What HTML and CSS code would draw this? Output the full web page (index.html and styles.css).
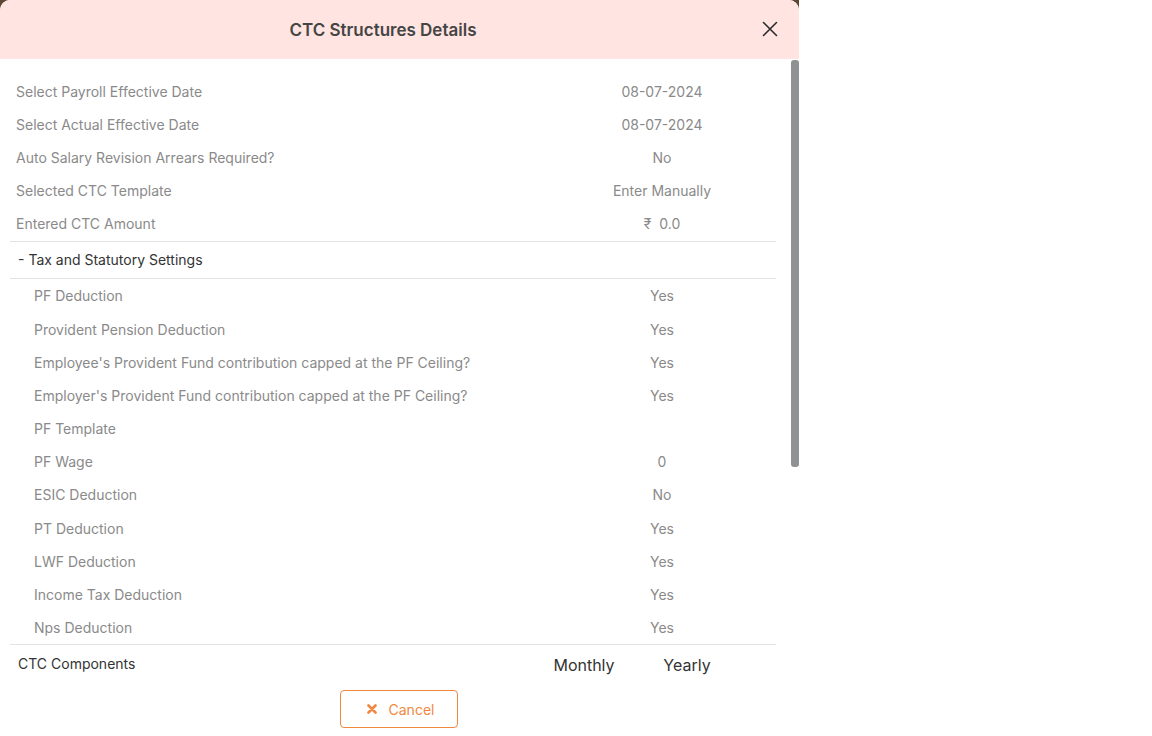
FILE: index.html
```html
<!DOCTYPE html>
<html>
<head>
<meta charset="utf-8">
<link rel="stylesheet" href="styles.css">
</head>
<body>
<div class="backdrop">
  <div class="modal">
    <div class="header">
      <div class="title">CTC Structures Details</div>
      <button class="close" aria-label="Close">
        <svg width="16" height="16" viewBox="0 0 16 16"><path d="M1.5 1.5 L14.5 14.5 M14.5 1.5 L1.5 14.5" stroke="#2b2b2b" stroke-width="1.6" fill="none" stroke-linecap="round"/></svg>
      </button>
    </div>
    <div class="body">
      <div class="content">
        <div class="row"><span class="label">Select Payroll Effective Date</span><span class="value">08-07-2024</span></div>
        <div class="row"><span class="label">Select Actual Effective Date</span><span class="value">08-07-2024</span></div>
        <div class="row"><span class="label">Auto Salary Revision Arrears Required?</span><span class="value">No</span></div>
        <div class="row"><span class="label">Selected CTC Template</span><span class="value">Enter Manually</span></div>
        <div class="row"><span class="label">Entered CTC Amount</span><span class="value">₹&nbsp; 0.0</span></div>
        <div class="section">- Tax and Statutory Settings</div>
        <div class="row sub"><span class="label">PF Deduction</span><span class="value">Yes</span></div>
        <div class="row sub"><span class="label">Provident Pension Deduction</span><span class="value">Yes</span></div>
        <div class="row sub"><span class="label">Employee's Provident Fund contribution capped at the PF Ceiling?</span><span class="value">Yes</span></div>
        <div class="row sub"><span class="label">Employer's Provident Fund contribution capped at the PF Ceiling?</span><span class="value">Yes</span></div>
        <div class="row sub"><span class="label">PF Template</span><span class="value"></span></div>
        <div class="row sub"><span class="label">PF Wage</span><span class="value">0</span></div>
        <div class="row sub"><span class="label">ESIC Deduction</span><span class="value">No</span></div>
        <div class="row sub"><span class="label">PT Deduction</span><span class="value">Yes</span></div>
        <div class="row sub"><span class="label">LWF Deduction</span><span class="value">Yes</span></div>
        <div class="row sub"><span class="label">Income Tax Deduction</span><span class="value">Yes</span></div>
        <div class="row sub"><span class="label">Nps Deduction</span><span class="value">Yes</span></div>
        <div class="components">
          <span class="comp-title">CTC Components</span>
          <span class="comp-col">Monthly</span>
          <span class="comp-col">Yearly</span>
          <span></span>
        </div>
        <div class="actions">
          <button class="cancel">
            <svg width="10" height="10" viewBox="0 0 10 10"><path d="M1.5 1.5 L8.5 8.5 M8.5 1.5 L1.5 8.5" stroke="#f0883f" stroke-width="2.6" fill="none" stroke-linecap="round"/></svg>
            <span>Cancel</span>
          </button>
        </div>
      </div>
      <div class="scrollbar"><div class="thumb"></div></div>
    </div>
  </div>
</div>
</body>
</html>
```
FILE: styles.css
```css
* { box-sizing: border-box; }
html, body { margin: 0; padding: 0; background: #ffffff; }
body {
  font-family: Inter, "Noto Sans", sans-serif;
  width: 1152px;
  height: 736px;
  overflow: hidden;
}
.backdrop {
  width: 799px;
  height: 736px;
  background: #5e4634;
}
.modal {
  width: 799px;
  height: 736px;
  background: #ffffff;
  border-radius: 10px 10px 0 0;
  overflow: hidden;
  display: flex;
  flex-direction: column;
}
.header {
  height: 59px;
  flex: 0 0 59px;
  background: #ffe4e1;
  display: flex;
  align-items: center;
  justify-content: center;
  position: relative;
}
.title {
  font-size: 17px;
  font-weight: 600;
  color: #454545;
  margin-left: -33px;
}
.close {
  position: absolute;
  right: 21px;
  top: 21px;
  width: 16px;
  height: 16px;
  padding: 0;
  border: 0;
  background: transparent;
  display: flex;
}
.body {
  flex: 1;
  display: flex;
  min-height: 0;
}
.content {
  flex: 1;
  padding: 15.5px 15px 0 10px;
  display: flex;
  flex-direction: column;
}
.row {
  height: 33.2px;
  flex: 0 0 33.2px;
  display: grid;
  grid-template-columns: 1fr 228px;
  align-items: center;
  font-size: 14px;
  color: #8a8a8a;
}
.row .label { padding-left: 6px; }
.row.sub .label { padding-left: 24px; }
.row .value { text-align: center; }
.section {
  height: 38px;
  flex: 0 0 38px;
  border-top: 1px solid #e3e3e3;
  border-bottom: 1px solid #e3e3e3;
  display: flex;
  align-items: center;
  padding-left: 8px;
  font-size: 14px;
  color: #333333;
  margin-top: 0.3px;
  margin-bottom: 0.5px;
}
.components {
  border-top: 1px solid #e3e3e3;
  height: 38px;
  flex: 0 0 38px;
  display: grid;
  grid-template-columns: 1fr 102px 102px 39px;
  align-items: center;
  padding-left: 8px;
  color: #333333;
}
.comp-title { font-size: 14px; }
.comp-col { font-size: 16px; text-align: center; padding-top: 3px; }
.comp-col + .comp-col { padding-left: 2px; }
.actions {
  display: flex;
  justify-content: center;
  padding-top: 8px;
  padding-left: 11px;
}
.cancel {
  width: 118px;
  height: 38px;
  border: 1px solid #f0883f;
  border-radius: 4px;
  background: #ffffff;
  color: #f0883f;
  font-family: Inter, "Noto Sans", sans-serif;
  font-size: 14px;
  display: flex;
  align-items: center;
  justify-content: center;
  gap: 12px;
  padding: 0 0 0 4px;
}
.scrollbar {
  width: 8px;
  flex: 0 0 8px;
  margin-top: 1px;
}
.thumb {
  height: 407px;
  background: #8f9292;
  border-radius: 3px;
}
```
